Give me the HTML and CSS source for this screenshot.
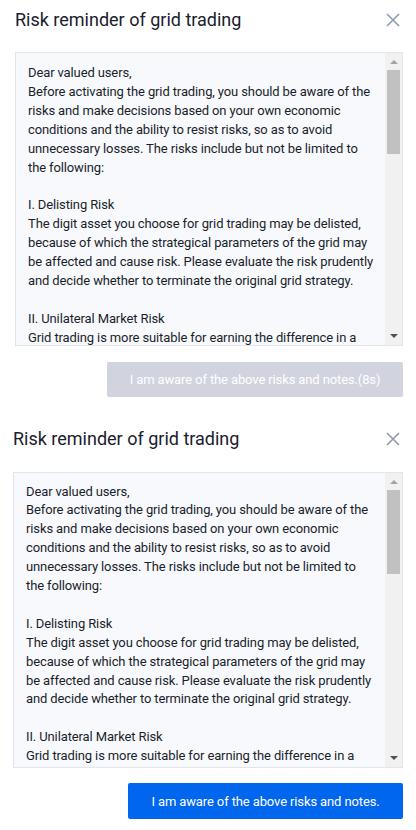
FILE: index.html
```html
<!DOCTYPE html>
<html lang="en">
<head>
<meta charset="utf-8">
<title>Risk reminder of grid trading</title>
<link rel="stylesheet" href="styles.css">
</head>
<body>
<section class="modal modal-first">
  <header class="modal-header">
    <h2 class="modal-title">Risk reminder of grid trading</h2>
    <button class="close" aria-label="Close">
      <svg width="14" height="14" viewBox="0 0 14 14"><path d="M1 1L13 13M13 1L1 13" stroke="#8d9bb3" stroke-width="1.6" fill="none"/></svg>
    </button>
  </header>
  <div class="risk-box">
    <div class="risk-text">
      <p>Dear valued users,<br>Before activating the grid trading, you should be aware of the risks and make decisions based on your own economic conditions and the ability to resist risks, so as to avoid unnecessary losses. The risks include but not be limited to the following:</p>
      <p>I. Delisting Risk<br>The digit asset you choose for grid trading may be delisted, because of which the strategical parameters of the grid may be affected and cause risk. Please evaluate the risk prudently and decide whether to terminate the original grid strategy.</p>
      <p>II. Unilateral Market Risk<br>Grid trading is more suitable for earning the difference in a volatile market. If the market keeps rising or falling in one direction, the price may move out of the grid range.</p>
    </div>
    <div class="scrollbar" aria-hidden="true">
      <span class="sb-btn"><svg width="8" height="5" viewBox="0 0 8 5"><path d="M0 5L4 1L8 5Z" fill="#a3a3a3"/></svg></span>
      <span class="sb-track"><span class="sb-thumb"></span></span>
      <span class="sb-btn"><svg width="8" height="5" viewBox="0 0 8 5"><path d="M0 0L8 0L4 4Z" fill="#505050"/></svg></span>
    </div>
  </div>
  <div class="actions">
    <button class="confirm confirm-disabled" disabled>I am aware of the above risks and notes.(8s)</button>
  </div>
</section>

<section class="modal modal-second">
  <header class="modal-header">
    <h2 class="modal-title">Risk reminder of grid trading</h2>
    <button class="close" aria-label="Close">
      <svg width="14" height="14" viewBox="0 0 14 14"><path d="M1 1L13 13M13 1L1 13" stroke="#8d9bb3" stroke-width="1.6" fill="none"/></svg>
    </button>
  </header>
  <div class="risk-box">
    <div class="risk-text">
      <p>Dear valued users,<br>Before activating the grid trading, you should be aware of the risks and make decisions based on your own economic conditions and the ability to resist risks, so as to avoid unnecessary losses. The risks include but not be limited to the following:</p>
      <p>I. Delisting Risk<br>The digit asset you choose for grid trading may be delisted, because of which the strategical parameters of the grid may be affected and cause risk. Please evaluate the risk prudently and decide whether to terminate the original grid strategy.</p>
      <p>II. Unilateral Market Risk<br>Grid trading is more suitable for earning the difference in a volatile market. If the market keeps rising or falling in one direction, the price may move out of the grid range.</p>
    </div>
    <div class="scrollbar" aria-hidden="true">
      <span class="sb-btn"><svg width="8" height="5" viewBox="0 0 8 5"><path d="M0 5L4 1L8 5Z" fill="#a3a3a3"/></svg></span>
      <span class="sb-track"><span class="sb-thumb"></span></span>
      <span class="sb-btn"><svg width="8" height="5" viewBox="0 0 8 5"><path d="M0 0L8 0L4 4Z" fill="#505050"/></svg></span>
    </div>
  </div>
  <div class="actions">
    <button class="confirm confirm-active">I am aware of the above risks and notes.</button>
  </div>
</section>
</body>
</html>
```

FILE: styles.css
```css
* { box-sizing: border-box; }
html, body { margin: 0; padding: 0; background: #ffffff; }
body {
  font-family: Roboto, "Noto Sans", Arial, sans-serif;
  color: #1f2430;
  width: 416px;
  overflow: hidden;
}
.modal {
  display: flex;
  flex-direction: column;
}
.modal-first { padding: 8px 13px 0 15px; }
.modal-second { padding: 0 13px 0 13px; margin-top: 30px; }
.modal-header {
  display: flex;
  align-items: center;
  justify-content: space-between;
  height: 24px;
}
.modal-title {
  margin: 0;
  font-size: 18px;
  font-weight: 400;
  line-height: 24px;
  color: #1a202c;
}
.close {
  border: 0;
  background: none;
  padding: 0;
  margin-right: 3px;
  width: 14px;
  height: 14px;
  display: flex;
}
.risk-box {
  display: flex;
  margin-top: 20px;
  height: 294px;
  border: 1px solid #e2e5ec;
  background: #f8f9fd;
}
.modal-second .risk-box { margin-top: 21px; height: 296px; }
.risk-text {
  flex: 1;
  min-width: 0;
  overflow: hidden;
  padding: 11px 12px 0;
  font-size: 13px;
  letter-spacing: -0.12px;
  line-height: 18.9px;
  color: #1a1f2b;
}
.modal-second .risk-text { padding-top: 9.5px; }
.risk-text p { margin: 0 0 18.9px; }
.scrollbar {
  width: 17px;
  flex: none;
  display: flex;
  flex-direction: column;
  background: #f1f1f1;
}
.sb-btn {
  height: 17px;
  display: flex;
  align-items: center;
  justify-content: center;
}
.sb-track {
  flex: 1;
  display: flex;
  flex-direction: column;
  padding: 0 2px;
}
.sb-thumb {
  height: 84px;
  background: #c1c1c1;
}
.actions {
  display: flex;
  justify-content: flex-end;
  margin-top: 16px;
}
.modal-second .actions { margin-top: 15px; }
.confirm {
  border: 0;
  border-radius: 2px;
  font-family: Roboto, "Noto Sans", Arial, sans-serif;
  font-size: 13px;
  letter-spacing: -0.12px;
  color: #ffffff;
  padding: 0;
}
.confirm-disabled {
  width: 296px;
  height: 35px;
  background: #d1d3df;
}
.confirm-active {
  width: 275px;
  height: 36px;
  background: #0066ee;
}
```
